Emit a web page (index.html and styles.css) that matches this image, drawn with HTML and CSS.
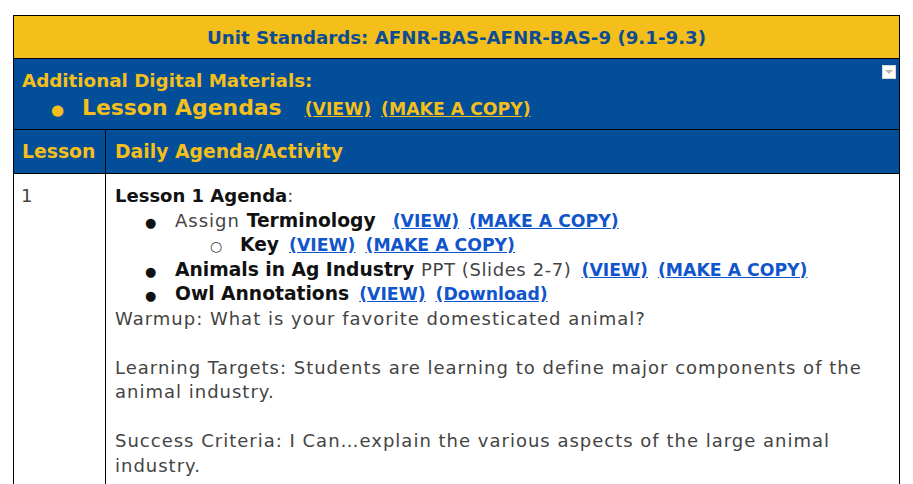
FILE: index.html
```html
<!DOCTYPE html>
<html>
<head>
<meta charset="utf-8">
<link rel="stylesheet" href="styles.css">
</head>
<body>
<div class="page">
<table class="plan">
  <colgroup><col class="c1"><col class="c2"></colgroup>
  <tr>
    <td class="standards" colspan="2">Unit Standards: AFNR-BAS-AFNR-BAS-9 (9.1-9.3)</td>
  </tr>
  <tr>
    <td class="materials" colspan="2">
      <div class="mat-title">Additional Digital Materials:</div>
      <div class="mat-item"><span class="mat-bullet">●</span><span class="mat-name">Lesson Agendas</span><a class="ylink">(VIEW)</a><a class="ylink">(MAKE A COPY)</a></div>
      <span class="dropdown"><svg width="10" height="6" viewBox="0 0 10 6"><path d="M1 1 L9 1 L5 5 Z" fill="#b8b8b8"/></svg></span>
    </td>
  </tr>
  <tr class="heads">
    <td class="col-lesson">Lesson</td>
    <td class="col-agenda">Daily Agenda/Activity</td>
  </tr>
  <tr class="body-row">
    <td class="num">1</td>
    <td class="agenda">
      <div class="line"><b>Lesson 1 Agenda</b>:</div>
      <div class="line item"><span class="dot">●</span>Assign <b class="bb">Terminology</b><a class="blink first">(VIEW)</a><a class="blink">(MAKE A COPY)</a></div>
      <div class="line sub"><span class="ring">○</span><b class="bb">Key</b><a class="blink">(VIEW)</a><a class="blink">(MAKE A COPY)</a></div>
      <div class="line item"><span class="dot">●</span><b class="bb">Animals in Ag Industry</b> <span class="ppt">PPT (Slides 2-7)</span><a class="blink">(VIEW)</a><a class="blink">(MAKE A COPY)</a></div>
      <div class="line item"><span class="dot">●</span><b class="bb">Owl Annotations</b><a class="blink">(VIEW)</a><a class="blink">(Download)</a></div>
      <p class="para">Warmup: What is your favorite domesticated animal?</p>
      <p class="para">Learning Targets: Students are learning to define major components of the animal industry.</p>
      <p class="para">Success Criteria: I Can…explain the various aspects of the large animal industry.</p>
    </td>
  </tr>
</table>
</div>
</body>
</html>
```

FILE: styles.css
```css
html, body {
  margin: 0;
  padding: 0;
  background: #ffffff;
}
.page {
  padding: 15px 13px 0 13px;
  font-family: "DejaVu Sans", sans-serif;
}
.plan {
  width: 887px;
  border-collapse: collapse;
  table-layout: fixed;
}
.c1 {
  width: 92px;
}
.plan td {
  border: 1px solid #000;
  vertical-align: top;
}
.standards {
  background: #f4bf1b;
  color: #0b4c93;
  font-weight: 700;
  font-size: 18.2px;
  text-align: center;
  height: 42px;
  padding: 0;
  vertical-align: middle !important;
}
.materials {
  background: #034e98;
  color: #f4bf1b;
  font-weight: 700;
  height: 71px;
  padding: 9px 8px 0 8px;
  position: relative;
  box-sizing: border-box;
}
.mat-title {
  font-size: 18.3px;
  line-height: 26px;
}
.mat-item {
  display: flex;
  align-items: baseline;
  line-height: 28px;
}
.mat-bullet {
  font-size: 15px;
  width: 31px;
  padding-left: 29px;
}
.mat-name {
  font-size: 21.9px;
  margin-right: 23px;
}
.ylink {
  color: #f4bf1b;
  text-decoration: underline;
  font-size: 17.3px;
  margin-right: 10px;
}
.dropdown {
  position: absolute;
  right: 3px;
  top: 6px;
  width: 14px;
  height: 14px;
  background: #ffffff;
  border: 1px solid #d8d8d8;
  box-sizing: border-box;
  display: flex;
  align-items: center;
  justify-content: center;
}
.heads td {
  background: #034e98;
  color: #f4bf1b;
  font-weight: 700;
  font-size: 18.8px;
  height: 43px;
  vertical-align: middle;
}
.col-lesson {
  padding: 0 0 0 8px;
}
.col-agenda {
  padding: 0 0 0 9px;
}
.num {
  padding: 10px 0 0 7px;
  font-size: 18px;
  line-height: 24.5px;
  color: #444;
}
.agenda {
  padding: 10px 9px 60px 9px;
  font-size: 18px;
  line-height: 24.5px;
  color: #444;
  letter-spacing: 1px;
}
.line {
  height: 24.5px;
  white-space: nowrap;
}
.para {
  margin: 0 0 24.5px 0;
}
.line b {
  font-weight: 700;
  color: #111;
  letter-spacing: 0;
}
.line b.bb {
  font-size: 18.7px;
}
.ppt {
  letter-spacing: 0.6px;
}
.item {
  padding-left: 30px;
}
.dot {
  display: inline-block;
  width: 30px;
  font-size: 13px;
  line-height: 1;
  color: #111;
}
.sub {
  padding-left: 95px;
}
.ring {
  display: inline-block;
  width: 30px;
  font-size: 14px;
  line-height: 1;
  color: #444;
}
.blink {
  color: #1155cc;
  text-decoration: underline;
  font-weight: 700;
  font-size: 17.3px;
  line-height: 1;
  letter-spacing: 0;
  margin-left: 10px;
}
.blink.first {
  margin-left: 17px;
}
```
